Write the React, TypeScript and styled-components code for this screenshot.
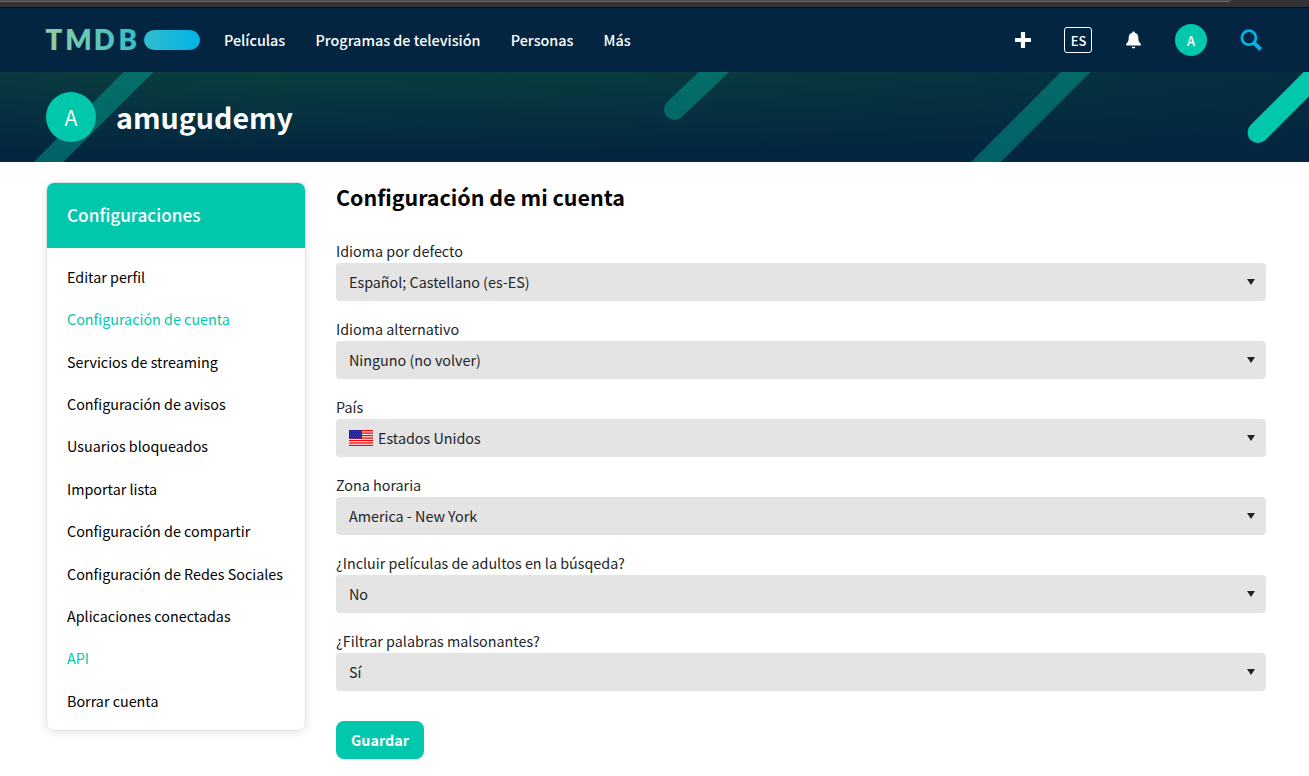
import React from "react";
import styled, { createGlobalStyle } from "styled-components";

const TEAL = "#01c8ad";

const GlobalStyle = createGlobalStyle`
  *, *::before, *::after { box-sizing: border-box; }
  body {
    margin: 0;
    background: #fff;
    color: #000;
    font-family: "Noto Sans CJK JP", "Noto Sans", sans-serif;
    font-size: 14.33px;
    overflow: hidden;
  }
`;

const Page = styled.div`
  display: flex;
  flex-direction: column;
  height: 776px;
  overflow: hidden;
`;

const WindowEdge = styled.div`
  height: 8px;
  flex: none;
  background: #333335;
  border-bottom: 1px solid #0c1016;
`;

const AddressField = styled.div`
  width: 1231px;
  height: 2px;
  background: #4a4a4c;
  border-bottom: 1px solid #68686a;
  border-bottom-right-radius: 3px;
`;

const Header = styled.header`
  display: flex;
  align-items: center;
  justify-content: space-between;
  height: 64px;
  flex: none;
  padding: 0 46px;
  background: #032541;
  color: #fff;
`;

const Group = styled.div`
  display: flex;
  align-items: center;
`;

const Logo = styled.svg`
  width: 154px;
  height: 20px;
  margin-right: 24px;
  overflow: visible;
`;

const NavLink = styled.a<{ $w: number }>`
  width: ${(p) => p.$w}px;
  margin-right: 30px;
  font-size: 14.36px;
  font-weight: 500;
  line-height: 20px;
  white-space: nowrap;
`;

const Actions = styled(Group)`
  svg { display: block; }
`;

const Language = styled.div`
  width: 28px;
  height: 26px;
  margin: 0 34px 0 33px;
  padding-left: 1px;
  border: 1px solid #fff;
  border-radius: 3px;
  font-size: 12.9px;
  font-weight: 500;
  line-height: 26px;
  text-align: center;
`;

const Avatar = styled.div<{ $size: number; $font: number; $weight: number }>`
  display: flex;
  align-items: center;
  justify-content: center;
  width: ${(p) => p.$size}px;
  height: ${(p) => p.$size}px;
  border-radius: 50%;
  background: ${TEAL};
  color: #fff;
  font-size: ${(p) => p.$font}px;
  font-weight: ${(p) => p.$weight};
  line-height: 1;
`;

const HeaderAvatar = styled(Avatar)`
  margin: 0 33px 0 34px;
  padding-top: 2px;
`;

const Banner = styled.section`
  position: relative;
  display: flex;
  align-items: center;
  gap: 20px;
  height: 90px;
  flex: none;
  padding: 0 46px;
  background: linear-gradient(to bottom, rgba(3, 37, 65, 0), #032541 95%),
    linear-gradient(90deg, #083a40, #083f3d 20%, #083c3e 45%, #06333f 80%, #052d40);
  color: #fff;
`;

const Stripes = styled.svg`
  position: absolute;
  inset: 0;
`;

const UserName = styled.h2`
  position: relative;
  margin: 0;
  font-size: 28.6px;
  font-weight: 700;
  line-height: 40px;
`;

const BannerAvatar = styled(Avatar)`
  position: relative;
`;

const Content = styled.main`
  display: flex;
  align-items: flex-start;
  gap: 30px;
  padding: 20px 43px 0 46px;
`;

const Card = styled.aside`
  width: 260px;
  height: 549px;
  flex: none;
  border: 1px solid #e3e3e3;
  border-radius: 8px;
  box-shadow: 0 2px 8px rgba(0, 0, 0, 0.1);
  overflow: hidden;
`;

const CardTitle = styled.h3`
  height: 65px;
  margin: 0;
  padding-left: 20px;
  background: ${TEAL};
  color: #fff;
  font-size: 17.2px;
  font-weight: 500;
  line-height: 63px;
`;

const Menu = styled.ul`
  margin: 0;
  padding: 8px 0;
  list-style: none;
`;

const MenuItem = styled.li<{ $active?: boolean }>`
  height: 42.37px;
  padding-left: 20px;
  color: ${(p) => (p.$active ? TEAL : "#000")};
  line-height: 42.2px;
  white-space: nowrap;
`;

const Form = styled.form`
  display: flex;
  flex-direction: column;
  flex: 1;
`;

const Title = styled.h2`
  margin: 0 0 28px;
  font-size: 21.45px;
  font-weight: 700;
  line-height: 30px;
`;

const Field = styled.div`
  height: 78px;
`;

const Label = styled.label`
  display: block;
  height: 23px;
  color: #212529;
  line-height: 21px;
`;

const Select = styled.div`
  display: flex;
  align-items: center;
  height: 38px;
  padding: 0 11px 0 13px;
  border-radius: 4px;
  background: #e4e4e4;
  color: #212529;
  line-height: 38px;
`;

const Value = styled.span`
  flex: 1;
`;

const Flag = styled.svg`
  width: 24px;
  height: 16px;
  margin-right: 5px;
`;

const Save = styled.button`
  width: 88px;
  height: 38px;
  margin-top: 13px;
  padding: 0;
  border: 0;
  border-radius: 8px;
  background: ${TEAL};
  color: #fff;
  font-family: inherit;
  font-size: 14.3px;
  font-weight: 700;
  line-height: 38px;
`;

const nav = [
  { label: "Películas", w: 61.5 },
  { label: "Programas de televisión", w: 165.3 },
  { label: "Personas", w: 62.8 },
  { label: "Más", w: 27 },
];

const menu = [
  { label: "Editar perfil" },
  { label: "Configuración de cuenta", active: true },
  { label: "Servicios de streaming" },
  { label: "Configuración de avisos" },
  { label: "Usuarios bloqueados" },
  { label: "Importar lista" },
  { label: "Configuración de compartir" },
  { label: "Configuración de Redes Sociales" },
  { label: "Aplicaciones conectadas" },
  { label: "API", active: true },
  { label: "Borrar cuenta" },
];

const fields = [
  { label: "Idioma por defecto", value: "Español; Castellano (es-ES)" },
  { label: "Idioma alternativo", value: "Ninguno (no volver)" },
  { label: "País", value: "Estados Unidos", flag: true },
  { label: "Zona horaria", value: "America - New York" },
  { label: "¿Incluir películas de adultos en la búsqeda?", value: "No" },
  { label: "¿Filtrar palabras malsonantes?", value: "Sí" },
];

const UsFlag = () => (
  <Flag viewBox="0 0 24 16">
    <rect width="24" height="16" fill="#fff" />
    {[0, 1, 2, 3, 4, 5, 6].map((i) => (
      <rect key={i} y={i * 2.46} width="24" height="1.35" fill="#ff0000" />
    ))}
    <rect width="13" height="8.6" fill="#22229a" />
    {[1.5, 3.2, 4.9, 6.6].map((y, r) =>
      [1.5, 3.5, 5.5, 7.5, 9.5, 11.2].map((x) => (
        <circle key={`${x}-${y}`} cx={x + (r % 2) * 0.6} cy={y} r="0.3" fill="#8f8fd0" />
      ))
    )}
  </Flag>
);

export default function App() {
  return (
    <Page>
      <GlobalStyle />
      <WindowEdge>
        <AddressField />
      </WindowEdge>
      <Header>
        <Group>
          <Logo viewBox="0 0 154 20">
            <defs>
              <linearGradient id="brand" gradientUnits="userSpaceOnUse" x1="0" y1="0" x2="154" y2="0">
                <stop offset="0" stopColor="#90cea1" />
                <stop offset="0.56" stopColor="#3cbec9" />
                <stop offset="1" stopColor="#00b3e5" />
              </linearGradient>
            </defs>
            <text y="20" fill="url(#brand)" fontFamily="Lato" fontWeight="800" fontSize="27.6">
              <tspan x="-0.4">T</tspan>
              <tspan x="19.3">M</tspan>
              <tspan x="47.700">D</tspan>
              <tspan x="72.600">B</tspan>
            </text>
            <rect x="98" y="0" width="56" height="20" rx="10" fill="url(#brand)" />
          </Logo>
          {nav.map((n) => (
            <NavLink key={n.label} $w={n.w}>
              {n.label}
            </NavLink>
          ))}
        </Group>
        <Actions>
          <svg width="16" height="16" viewBox="0 0 16 16" fill="#fff">
            <path d="M5.900.5Q5.900 0 6.400 0h3.200q.5 0 .5.5v5.400h5.400q.5 0 .5.5v3.200q0 .5-.5.5H10.100v5.400q0 .5-.5.5H6.400q-.5 0-.5-.5V10.100H.5Q0 10.100 0 9.600V6.400q0-.5.5-.5h5.400z" />
          </svg>
          <Language>ES</Language>
          <svg width="15" height="18" viewBox="0 0 15 18" fill="#fff">
            <path d="M7.500 0.500C8.300.5 8.700 1 8.800 1.700C11.300 2.300 12.300 4.300 12.300 6.500C12.300 9.500 12.800 10.800 14.500 12.500C15.300 13.400 14.900 14.500 14 14.500H1C.1 14.500-.3 13.400.5 12.500C2.200 10.800 2.700 9.500 2.700 6.500C2.700 4.300 3.700 2.300 6.200 1.700C6.300 1 6.700.5 7.500.5z" />
            <path d="M5.700 15.700h3.600a1.800 1.800 0 0 1-3.600 0z" />
          </svg>
          <HeaderAvatar $size={32} $font={12.9} $weight={500}>
            A
          </HeaderAvatar>
          <svg width="23" height="23" viewBox="0 0 23 23" fill="none" stroke="#01b4e4">
            <circle cx="8.900" cy="8.700" r="7" strokeWidth="2.800" />
            <path d="M14 13.800L20.700 20.500" strokeWidth="4" />
          </svg>
        </Actions>
      </Header>
      <Banner>
        <Stripes width="1309" height="90" viewBox="0 0 1309 90">
          <g stroke={TEAL} strokeWidth="21" strokeLinecap="round">
            <path d="M158.500 -20L28.500 110" opacity="0.37" />
            <path d="M735 -20L674.500 37.500" opacity="0.37" />
            <path d="M1095.700 -20L966 110" opacity="0.37" />
            <path d="M1338.500 -20L1258 60.500" />
          </g>
        </Stripes>
        <BannerAvatar $size={50} $font={21.5} $weight={350}>
          A
        </BannerAvatar>
        <UserName>amugudemy</UserName>
      </Banner>
      <Content>
        <Card>
          <CardTitle>Configuraciones</CardTitle>
          <Menu>
            {menu.map((m) => (
              <MenuItem key={m.label} $active={m.active}>
                {m.label}
              </MenuItem>
            ))}
          </Menu>
        </Card>
        <Form>
          <Title>Configuración de mi cuenta</Title>
          {fields.map((f) => (
            <Field key={f.label}>
              <Label>{f.label}</Label>
              <Select>
                {f.flag && <UsFlag />}
                <Value>{f.value}</Value>
                <svg width="8" height="6" viewBox="0 0 8 6" fill="#212529">
                  <path d="M0 0h8L4 6z" />
                </svg>
              </Select>
            </Field>
          ))}
          <Save type="button">Guardar</Save>
        </Form>
      </Content>
    </Page>
  );
}
